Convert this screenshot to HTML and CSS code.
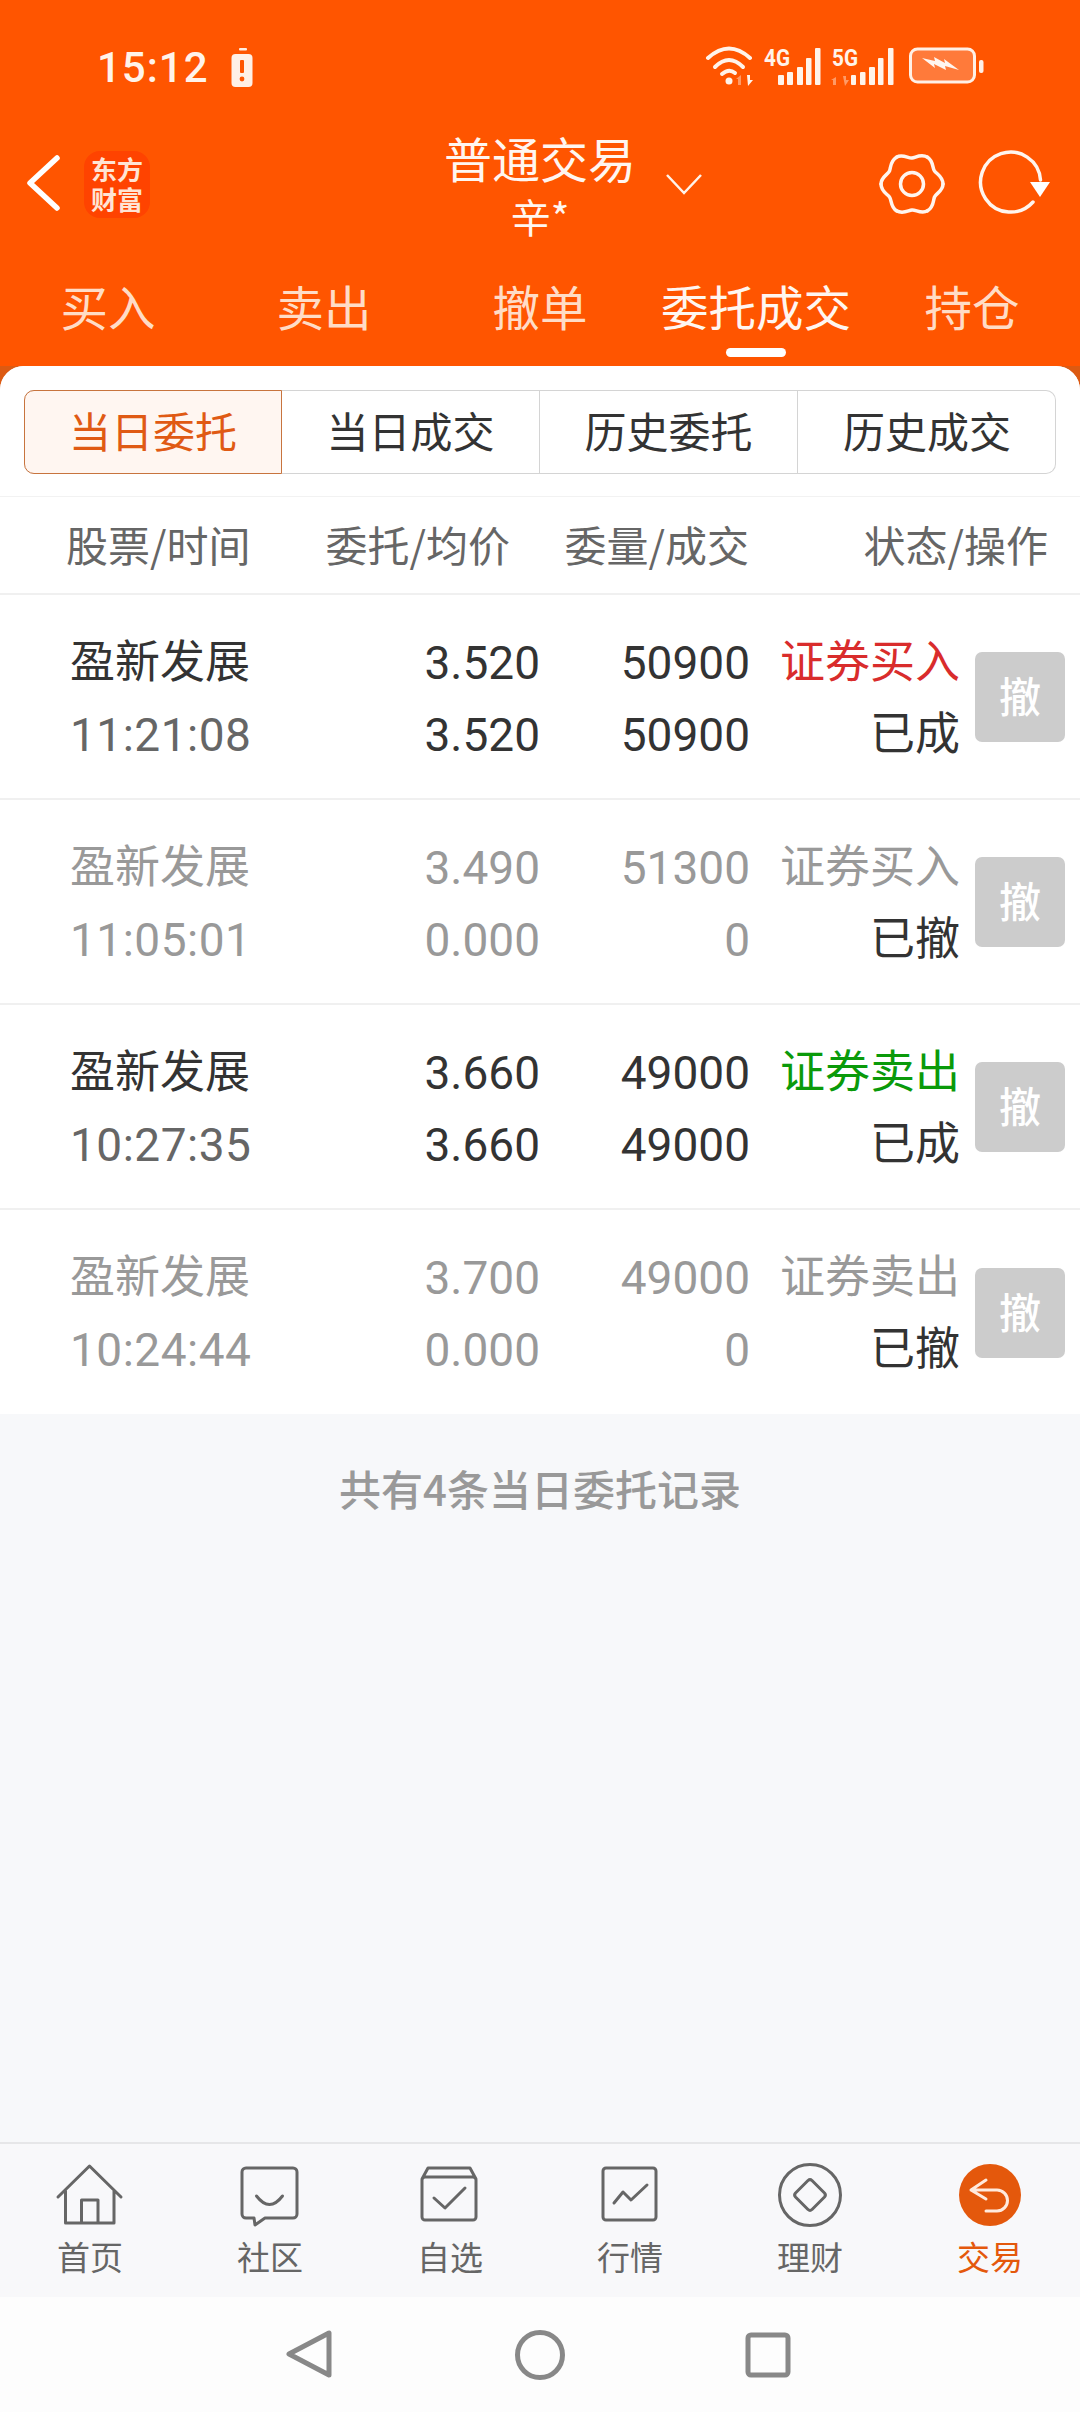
FILE: index.html
```html
<!DOCTYPE html>
<html lang="zh-CN">
<head>
<meta charset="utf-8">
<title>普通交易</title>
<link rel="stylesheet" href="styles.css">
</head>
<body>
<div class="app">
  <div class="status">
    <span class="clock">15:12</span>
    <svg class="alert" width="22" height="40" viewBox="0 0 22 40"><rect x="8" y="0" width="8" height="2.5" rx="1" fill="#ffeee2"/><rect x="0.5" y="6" width="21" height="33" rx="4" fill="#fff0e6"/><rect x="9" y="12" width="4" height="13" rx="1" fill="#ff5500"/><circle cx="11" cy="31" r="2.4" fill="#ff5500"/></svg>
    <svg class="sysicons" width="290" height="54" viewBox="0 0 290 54">
      <g fill="none" stroke="#fff3ea" stroke-width="4" stroke-linecap="round">
        <path d="M9 19Q30 0 51 19"/><path d="M16 28Q30 14 44 28"/><path d="M23 35Q30 29 36 34"/>
      </g>
      <circle cx="30" cy="42" r="3.5" fill="#fff3ea"/>
      <path d="M42 36v10h-3v-6l-2 0z" fill="#ff9a66"/><path d="M48 36h3v5h3l-5 6z" fill="#fff3ea"/>
      <text class="net" x="65" y="27" textLength="26" lengthAdjust="spacingAndGlyphs">4G</text>
      <g fill="#fff3ea"><rect x="79" y="36" width="6" height="10" rx="1"/><rect x="88" y="33" width="6" height="13" rx="1"/><rect x="98" y="28" width="6" height="18" rx="1"/><rect x="107" y="19" width="5.500" height="27" rx="1"/><rect x="116" y="9" width="5.500" height="37" rx="1"/></g>
      <text class="net" x="133" y="27" textLength="26" lengthAdjust="spacingAndGlyphs">5G</text>
      <path d="M137 38v8h-3v-5l-2 0z" fill="#ff9a66"/><path d="M144 37h3v4h3l-4 6z" fill="#ff9a66"/>
      <g fill="#fff3ea"><rect x="152" y="36" width="5" height="10" rx="1"/><rect x="161" y="33" width="5.500" height="13" rx="1"/><rect x="170" y="28" width="6" height="18" rx="1"/><rect x="179" y="19" width="5.500" height="27" rx="1"/><rect x="189" y="9" width="5.500" height="37" rx="1"/></g>
      <rect x="211.500" y="10" width="64" height="33" rx="7" fill="#ff7a3a" stroke="#fff0e6" stroke-width="3"/>
      <rect x="280" y="21" width="4.500" height="13" rx="2" fill="#fff0e6"/>
      <path d="M223 19l13 3-1-4 11 6-1-4 15 11-14-4 1 4-12-6 1 4z" fill="#fff6f0"/>
    </svg>
  </div>

  <div class="appbar">
    <div class="bar-left">
      <svg class="back" width="36" height="60" viewBox="0 0 36 60"><path d="M31 4L4 29L31 54" fill="none" stroke="#fff" stroke-width="5.500" stroke-linecap="round" stroke-linejoin="round"/></svg>
      <div class="logo">东方<br>财富</div>
    </div>
    <div class="title">
      <div class="title-main">普通交易</div>
      <div class="title-sub">辛*</div>
    </div>
    <div class="bar-right">
      <svg class="caret" width="38" height="22" viewBox="0 0 38 22"><path d="M2 2L19 20L36 2" fill="none" stroke="#fff3ea" stroke-width="2.500"/></svg>
      <svg class="gear" width="70" height="70" viewBox="-35 -35 70 70">
        <defs><path id="lobe" d="M31 0C31 7 24 9.500 22.500 13C21 16.500 22 23 15.500 26.850"/></defs>
        <g fill="none" stroke="#fff5ee" stroke-width="3.500" stroke-linecap="round">
          <use href="#lobe"/><use href="#lobe" transform="rotate(60)"/><use href="#lobe" transform="rotate(120)"/><use href="#lobe" transform="rotate(180)"/><use href="#lobe" transform="rotate(240)"/><use href="#lobe" transform="rotate(300)"/>
          <circle r="11.500"/>
        </g>
      </svg>
      <svg class="refresh" width="80" height="70" viewBox="0 0 80 70"><path d="M58 53A30 30 0 1 1 65.500 31" fill="none" stroke="#fff5ee" stroke-width="3.500" stroke-linecap="round"/><path d="M55 33H75L65 48z" fill="#fff"/></svg>
    </div>
  </div>

  <div class="tabs">
    <div class="tab">买入</div>
    <div class="tab">卖出</div>
    <div class="tab">撤单</div>
    <div class="tab active">委托成交<i class="tab-mark"></i></div>
    <div class="tab">持仓</div>
  </div>

  <div class="main">
    <div class="sheet">
      <div class="seg-wrap">
        <div class="seg">
          <div class="seg-item on">当日委托</div>
          <div class="seg-item">当日成交</div>
          <div class="seg-item">历史委托</div>
          <div class="seg-item">历史成交</div>
        </div>
      </div>
      <div class="thead">
        <span>股票/时间</span><span class="r">委托/均价</span><span class="r">委量/成交</span><span class="r">状态/操作</span>
      </div>

      <div class="row">
        <span class="cjk">盈新发展</span><span class="r">3.520</span><span class="r">50900</span><span class="r buy cjk">证券买入</span><span class="btn">撤</span>
        <span class="time">11:21:08</span><span class="r">3.520</span><span class="r">50900</span><span class="r cjk">已成</span>
      </div>
      <div class="row dim">
        <span class="cjk">盈新发展</span><span class="r">3.490</span><span class="r">51300</span><span class="r cjk">证券买入</span><span class="btn">撤</span>
        <span class="time">11:05:01</span><span class="r">0.000</span><span class="r">0</span><span class="r state cjk">已撤</span>
      </div>
      <div class="row">
        <span class="cjk">盈新发展</span><span class="r">3.660</span><span class="r">49000</span><span class="r sell cjk">证券卖出</span><span class="btn">撤</span>
        <span class="time">10:27:35</span><span class="r">3.660</span><span class="r">49000</span><span class="r cjk">已成</span>
      </div>
      <div class="row dim last">
        <span class="cjk">盈新发展</span><span class="r">3.700</span><span class="r">49000</span><span class="r cjk">证券卖出</span><span class="btn">撤</span>
        <span class="time">10:24:44</span><span class="r">0.000</span><span class="r">0</span><span class="r state cjk">已撤</span>
      </div>

      <div class="note">共有4条当日委托记录</div>
    </div>
  </div>

  <div class="nav">
    <div class="nav-item">
      <svg class="ico" width="70" height="70" viewBox="0 0 70 70"><path d="M3 37L34.500 6L66 37M10.500 31V63H59V31M26.500 63V40H43V63" /></svg>
      <span>首页</span>
    </div>
    <div class="nav-item">
      <svg class="ico" width="70" height="70" viewBox="0 0 70 70"><path d="M11 8H58a4 4 0 0 1 4 4V54a4 4 0 0 1-4 4H30L20 65L19 58H11a4 4 0 0 1-4-4V12a4 4 0 0 1 4-4z"/><path d="M21.500 36Q34.500 53 47.500 36"/></svg>
      <span>社区</span>
    </div>
    <div class="nav-item">
      <svg class="ico" width="70" height="70" viewBox="0 0 70 70"><path d="M10 17H58a3 3 0 0 1 3 3V57a3 3 0 0 1-3 3H10a3 3 0 0 1-3-3V20a3 3 0 0 1 3-3zM7 19L13 8H55L61 19"/><path d="M19 38L30 48L50 28"/></svg>
      <span>自选</span>
    </div>
    <div class="nav-item">
      <svg class="ico" width="70" height="70" viewBox="0 0 70 70"><rect x="8" y="8" width="53" height="52" rx="3"/><path d="M19 43L28 32L36 40L52 25"/></svg>
      <span>行情</span>
    </div>
    <div class="nav-item">
      <svg class="ico" width="70" height="70" viewBox="0 0 70 70"><circle cx="35" cy="35" r="30.500"/><path d="M33 20.500a3 3 0 0 1 4 0L49.500 33a3 3 0 0 1 0 4L37 49.500a3 3 0 0 1-4 0L20.500 37a3 3 0 0 1 0-4z"/></svg>
      <span>理财</span>
    </div>
    <div class="nav-item current">
      <svg class="ico-on" width="70" height="70" viewBox="0 0 70 70"><circle cx="35" cy="35" r="31"/><path d="M31 20L16 30L31 39M16 30H42A10.500 10.500 0 0 1 42 51H31"/></svg>
      <span>交易</span>
    </div>
  </div>

  <div class="sysnav">
    <svg class="sys" width="60" height="60" viewBox="0 0 60 60"><path d="M49 8V50L9 29z"/></svg>
    <svg class="sys" width="60" height="60" viewBox="0 0 60 60"><circle cx="30" cy="30" r="22.500"/></svg>
    <svg class="sys" width="60" height="60" viewBox="0 0 60 60"><rect x="8" y="10" width="40" height="40" rx="3"/></svg>
  </div>
</div>
</body>
</html>
```

FILE: styles.css
```css
* { box-sizing: border-box; }
html, body { margin: 0; padding: 0; }
body { width: 1080px; height: 2412px; font-family: Roboto, "Noto Sans CJK SC", sans-serif; color: #333; overflow: hidden; }
.app { width: 1080px; height: 2412px; display: flex; flex-direction: column; background: #ff5500; }

.status { height: 117px; flex: none; display: flex; align-items: flex-start; padding: 40px 0 0 97px; }
.clock { font-size: 42px; line-height: 56px; font-weight: 500; color: #fff3ea; letter-spacing: 1px; width: 134px; }
.alert { margin-top: 8px; }
.sysicons { margin-left: 446px; margin-top: -1px; }
.net { font: 700 24px Roboto, sans-serif; fill: #fff3ea; }

.appbar { height: 134px; flex: none; display: grid; grid-template-columns: 1fr 192px 1fr; align-items: center; }
.bar-left { display: flex; align-items: center; padding-left: 26px; gap: 22px; }
.back { display: block; }
.logo { width: 66px; height: 67px; border-radius: 16px; background: #ff4300; color: #ffe4d4; font: 700 26px/30px "Noto Sans CJK SC", sans-serif; text-align: center; padding-top: 3px; }
.title { text-align: center; color: #fff6f0; font-family: "Noto Sans CJK SC", sans-serif; }
.title-main { font-size: 48px; line-height: 62px; margin-top: 2px; }
.title-sub { font-size: 40px; line-height: 56px; }
.bar-right { display: flex; align-items: center; padding-left: 29px; padding-right: 25px; }
.caret { margin-right: auto; }
.gear { margin-right: 28px; }

.tabs { height: 115px; flex: none; display: grid; grid-template-columns: repeat(5, 216px); }
.tab { display: flex; flex-direction: column; align-items: center; padding-top: 27px; font: 47.500px/56px "Noto Sans CJK SC", sans-serif; color: #ffdcc6; }
.tab.active { color: #fff6f0; }
.tab-mark { display: block; width: 60px; height: 9px; border-radius: 5px; background: #fff; margin-top: 14px; }

.main { flex: 1; min-height: 0; background: #dc5a12; display: flex; }
.sheet { flex: 1; background: #f7f8fa; border-radius: 24px 24px 0 0; overflow: hidden; display: flex; flex-direction: column; }

.seg-wrap { background: #fff; padding: 24px 24px 23px; height: 131px; border-bottom: 1px solid #f2f2f2; flex: none; }
.seg { display: grid; grid-template-columns: repeat(4, 258px); height: 84px; border: 1px solid #d4d4d4; border-left: 0; border-radius: 10px; }
.seg-item { display: flex; align-items: center; justify-content: center; margin: -1px 0; padding-bottom: 5px; border-right: 1px solid #d4d4d4; font: 42px "Noto Sans CJK SC", sans-serif; color: #333; }
.seg-item:last-child { border-right: 0; }
.seg-item.on { background: #fff6f1; color: #e05a14; border: 1px solid #c8743e; border-radius: 10px 0 0 10px; }

.thead { flex: none; height: 98px; background: #fff; border-bottom: 2px solid #f0f0f0; display: grid; grid-template-columns: 204px 240px 239px 299px; padding-left: 66px; padding-bottom: 3px; align-items: center; font: 42px "Noto Sans CJK SC", sans-serif; color: #666; }
.r { text-align: right; }

.row { flex: none; height: 205px; background: #fff; border-bottom: 2px solid #f0f0f0; display: grid; grid-template-columns: 270px 200px 210px 210px 105px; grid-template-rows: 72px 72px; align-content: center; align-items: center; padding-left: 70px; padding-top: 4px; font-size: 46px; line-height: 72px; color: #333; }
.row.last { height: 204px; border-bottom: 0; }
.row > span { white-space: nowrap; }
.cjk { font-size: 45px; }
.time { color: #666; letter-spacing: 0.5px; }
.buy { color: #d92c2c; }
.sell { color: #0a9a0a; }
.dim { color: #999; }
.dim .time { color: #999; }
.state { color: #333; }
.btn { grid-row: span 2; justify-self: end; width: 90px; height: 90px; margin-bottom: 3px; border-radius: 7px; background: #ccc; color: #fff; font-size: 42px; font-weight: 500; line-height: 94px; text-align: center; }

.note { flex: 1; text-align: center; padding-top: 49px; font: 500 42px/50px "Noto Sans CJK SC", sans-serif; color: #999; }

.nav { flex: none; height: 155px; background: #f8f8fa; border-top: 2px solid #e6e6e8; display: grid; grid-template-columns: repeat(6, 180px); padding-top: 16px; }
.nav-item { display: flex; flex-direction: column; align-items: center; gap: 6px; font: 33px/40px "Noto Sans CJK SC", sans-serif; color: #666; }
.nav-item.current { color: #e4580c; }
.ico { display: block; fill: none; stroke: #666; stroke-width: 3; stroke-linejoin: round; stroke-linecap: round; }
.ico-on { display: block; }
.ico-on circle { fill: #e4580c; }
.ico-on path { fill: none; stroke: #ffeadd; stroke-width: 3; stroke-linecap: round; stroke-linejoin: round; }

.sysnav { flex: none; height: 115px; background: #fdfdfd; display: flex; justify-content: center; align-items: flex-start; gap: 170px; padding-top: 28px; }
.sys { display: block; fill: none; stroke: #888; stroke-width: 5; stroke-linejoin: round; }
```
